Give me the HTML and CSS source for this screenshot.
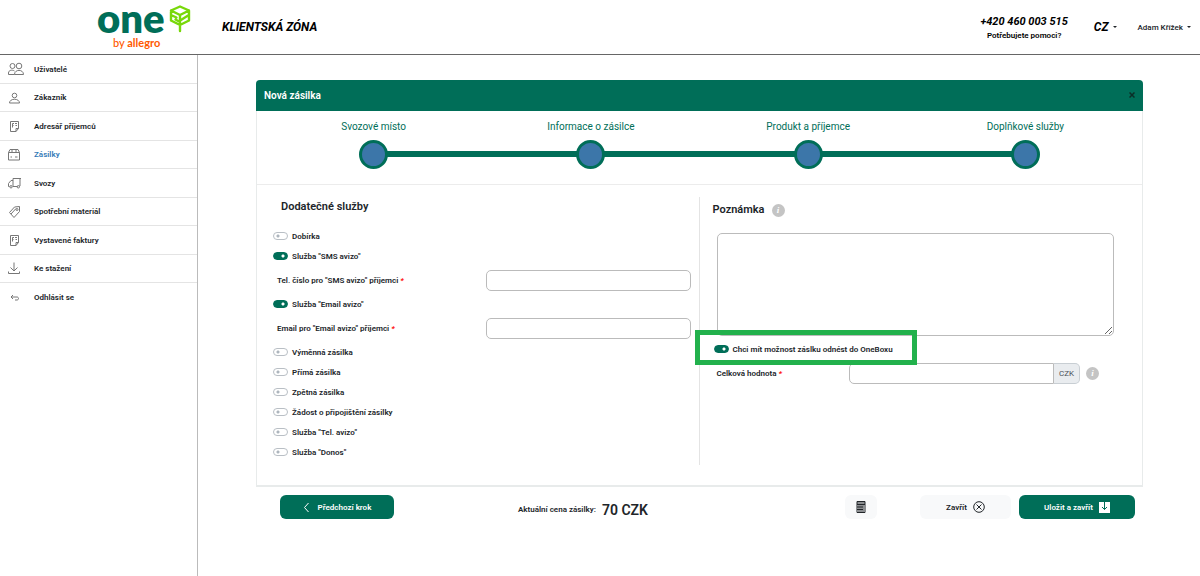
FILE: index.html
```
<!DOCTYPE html>
<html lang="cs">
<head>
  <meta charset="UTF-8">
  <meta name="viewport" content="width=device-width, initial-scale=1.0">
  <title>Klientská zóna - Nová zásilka</title>
  <link rel="stylesheet" href="styles.css">
</head>
<body>
  <header class="topbar">
    <a class="logo" href="#">
      <span class="logo-main">
        <span class="logo-name">one</span>
        <svg width="22" height="28" viewBox="0 0 22 28" fill="none" stroke="#78d80a" stroke-width="2.4" stroke-linejoin="round" stroke-linecap="round">
          <path d="M11 1.500 20 5.500V15.500L11 20 2 15.500V5.500ZM2 5.500 11 10 20 5.500M11 10V26M3 10.500 7.500 12.500M11 17 6.500 14.500M12 15 19 10.500"/>
        </svg>
      </span>
      <span class="logo-by">by <b>allegro</b></span>
    </a>
    <h1 class="zone">KLIENTSKÁ ZÓNA</h1>
    <div class="contact">
      <a class="phone" href="tel:+420460003515">+420 460 003 515</a>
      <span>Potřebujete pomoci?</span>
    </div>
    <button class="menu-button lang" type="button">CZ <i class="caret"></i></button>
    <button class="menu-button user" type="button">Adam Křížek <i class="caret"></i></button>
  </header>

  <div class="layout">
    <nav class="sidebar">
      <a href="#">
        <svg width="16" height="14" viewBox="0 0 16 14"><circle cx="4.500" cy="4" r="2.500"/><circle cx="11" cy="4" r="2.800"/><path d="M6.500 12.500H.5V11c0-3 4-3.500 6-2M6.500 12.500c0-5.500 9-5.500 9 0Z"/></svg>
        Uživatelé
      </a>
      <a href="#">
        <svg width="16" height="14" viewBox="0 0 16 14"><circle cx="6.500" cy="4.500" r="2.300"/><path d="M1.500 12c0-5 10-5 10 0Z"/></svg>
        Zákazník
      </a>
      <a href="#">
        <svg width="16" height="14" viewBox="0 0 16 14"><path d="M2.500 2.500h8v7l-2.500 3H2.500ZM8 12.500v-3h2.500M4.500 4.500h1.500M4.500 6.500h1M4.500 4.500v4M7 4.500h2M7.500 6.500H9"/></svg>
        Adresář příjemců
      </a>
      <a class="active" href="#">
        <svg width="16" height="14" viewBox="0 0 16 14"><path d="M.5 4.500 2 1.500h8l1.500 3v7.500H.5ZM.5 4.500h11M4 2v2M8 2v2M2.500 9h1.500M7 9h2.500"/></svg>
        Zásilky
      </a>
      <a href="#">
        <svg width="16" height="14" viewBox="0 0 16 14"><path d="M5 10.500V2.500h8M12 2.500v7.500h-.5M9.500 10.500H5M5 4.500H3L.5 7.500v3h1"/><circle cx="3" cy="10.800" r="1.200"/><circle cx="10.300" cy="10.800" r="1.200"/></svg>
        Svozy
      </a>
      <a href="#">
        <svg width="16" height="14" viewBox="0 0 16 14"><path d="M1.500 7.500 6.500 2 11.500 1.500v5L6 12.500ZM3 9 8 3.500"/><circle cx="9" cy="4.500" r="1"/></svg>
        Spotřební materiál
      </a>
      <a href="#">
        <svg width="16" height="14" viewBox="0 0 16 14"><path d="M2.500 2.500h8v7l-2.500 3H2.500ZM8 12.500v-3h2.500M4.500 4.500h1.500M4.500 6.500h1M4.500 4.500v4M7 4.500h2M7.500 6.500H9"/></svg>
        Vystavené faktury
      </a>
      <a href="#">
        <svg width="16" height="14" viewBox="0 0 16 14"><path d="M6 .5v8.500M2.500 5.500 6 9 9.500 5.500M.5 9.500v2h11v-2"/></svg>
        Ke stažení
      </a>
      <a href="#">
        <svg width="16" height="14" viewBox="0 0 16 14"><path d="M5 4 3 6l2 2M3 6h6c2 0 2 3 0 3H7"/></svg>
        Odhlásit se
      </a>
    </nav>

    <main class="content">
      <section class="panel">
        <div class="panel-head">
          <h2>Nová zásilka</h2>
          <button class="close" type="button" aria-label="Zavřít okno">
            <svg width="6" height="6" viewBox="0 0 6 6"><path d="M.5.5l5 5M5.500.5l-5 5"/></svg>
          </button>
        </div>

        <ol class="steps">
          <li>Svozové místo<span class="dot"></span></li>
          <li>Informace o zásilce<span class="dot"></span></li>
          <li>Produkt a příjemce<span class="dot"></span></li>
          <li>Doplňkové služby<span class="dot"></span></li>
        </ol>

        <form class="columns" id="shipment">
          <div class="services">
            <h3>Dodatečné služby</h3>
            <label class="toggle"><input type="checkbox">Dobírka</label>
            <label class="toggle"><input type="checkbox" checked>Služba "SMS avizo"</label>
            <div class="field">
              <label for="sms">Tel. číslo pro "SMS avizo" příjemci <em>*</em></label>
              <input type="tel" id="sms">
            </div>
            <label class="toggle"><input type="checkbox" checked>Služba "Email avizo"</label>
            <div class="field">
              <label for="email">Email pro "Email avizo" příjemci <em>*</em></label>
              <input type="email" id="email">
            </div>
            <label class="toggle"><input type="checkbox">Výměnná zásilka</label>
            <label class="toggle"><input type="checkbox">Přímá zásilka</label>
            <label class="toggle"><input type="checkbox">Zpětná zásilka</label>
            <label class="toggle"><input type="checkbox">Žádost o připojištění zásilky</label>
            <label class="toggle"><input type="checkbox">Služba "Tel. avizo"</label>
            <label class="toggle"><input type="checkbox">Služba "Donos"</label>
          </div>

          <div class="note">
            <h3><label for="note">Poznámka</label> <span class="info">i</span></h3>
            <textarea id="note"></textarea>
            <label class="toggle marked"><input type="checkbox" checked>Chci mít možnost záslku odnést do OneBoxu</label>
            <div class="value">
              <label for="value">Celková hodnota <em>*</em></label>
              <div class="input-group">
                <input type="text" id="value">
                <span>CZK</span>
              </div>
              <span class="info">i</span>
            </div>
          </div>
        </form>
      </section>

      <div class="actions">
        <button class="btn primary back" type="button">
          <svg width="7" height="11" viewBox="0 0 7 11"><path d="M5.500 1 1.500 5.500l4 4.500"/></svg>
          Předchozí krok
        </button>
        <p class="price">Aktuální cena zásilky: <strong>70 CZK</strong></p>
        <button class="btn calc" type="button" aria-label="Kalkulačka">
          <svg width="10" height="12" viewBox="0 0 10 12"><path d="M1 .5h8v11H1ZM1 2h8M1 3.500h8M3 4v7M5 4v7M7 4v7M1 6h6M1 8.500h6"/></svg>
        </button>
        <button class="btn cancel" type="button">
          Zavřít
          <svg width="12" height="12" viewBox="0 0 12 12"><circle cx="6" cy="6" r="5.300"/><path d="m3.500 3.500 5 5M8.500 3.500l-5 5"/></svg>
        </button>
        <button class="btn primary save" type="submit" form="shipment">
          Uložit a zavřít
          <svg width="11" height="11" viewBox="0 0 11 11"><path class="sheet" d="M0 0h11v11H0Z"/><path class="arrow" d="M5.500 0v7.500M3 5l2.500 2.500L8 5"/></svg>
        </button>
      </div>
    </main>
  </div>
</body>
</html>
```
FILE: styles.css
```
*, *::before, *::after {
  box-sizing: border-box;
  margin: 0;
  padding: 0;
}
body {
  display: flex;
  flex-direction: column;
  min-height: 100vh;
  font-family: Roboto, sans-serif;
  font-size: 8px;
  font-weight: 600;
  color: #212529;
  background: #fff;
}
button, input, textarea {
  font: inherit;
  color: inherit;
}
button {
  border: none;
  background: none;
  cursor: pointer;
}
a {
  color: inherit;
  text-decoration: none;
}
svg {
  flex: none;
  fill: none;
}
em {
  color: #f00;
}

/* top bar */
.topbar {
  display: flex;
  align-items: center;
  height: 55px;
  padding: 0 9px 0 97px;
  border-bottom: 1px solid #666;
}
.logo {
  width: 93px;
  font-family: Lato, sans-serif;
}
.logo-main {
  display: flex;
  align-items: flex-start;
  gap: 4px;
  height: 31px;
}
.logo-name {
  font-size: 40px;
  line-height: 26px;
  font-weight: 800;
  color: #006e58;
}
.logo-by {
  display: block;
  padding-left: 16px;
  font-size: 11px;
  line-height: 14px;
  font-weight: 500;
  color: #ff5a00;
}
.zone {
  margin: 0 auto 0 32px;
  font-size: 12px;
  font-style: italic;
  font-weight: 700;
  color: #000;
}
.contact {
  display: flex;
  flex-direction: column;
  align-items: center;
  gap: 3px;
  color: #000;
}
.phone {
  font-size: 11px;
  line-height: 13px;
  font-style: italic;
  font-weight: 700;
}
.menu-button {
  display: flex;
  align-items: center;
  gap: 4px;
}
.lang {
  margin-left: 26px;
  font-size: 12px;
  font-style: italic;
  font-weight: 700;
  color: #000;
}
.user {
  margin-left: 21px;
  font-weight: 500;
}
.caret {
  border: 2px solid transparent;
  border-top-color: #212529;
  border-bottom: 0;
}

.layout {
  display: flex;
  flex: 1;
}

/* left menu */
.sidebar {
  flex: 0 0 198px;
  border-right: 1px solid #bbb;
}
.sidebar a {
  display: flex;
  align-items: center;
  gap: 10px;
  height: 29px;
  padding-left: 8px;
  border-bottom: 1px solid #e4e4e4;
}
.sidebar a:nth-child(even) {
  height: 28px;
}
.sidebar a:last-child {
  border-bottom: none;
}
.sidebar svg {
  stroke: #777;
}
.sidebar .active {
  color: #337ab7;
}

/* shipment panel */
.content {
  flex: 1;
  padding: 25px 57px 0 58px;
}
.panel {
  border: 1px solid #e8ebeb;
  border-top: none;
  border-bottom-width: 2px;
  border-radius: 4px 4px 0 0;
}
.panel-head {
  display: flex;
  align-items: center;
  justify-content: space-between;
  height: 31px;
  margin: 0 -1px;
  padding: 0 8px;
  border-radius: 4px 4px 0 0;
  color: #fff;
  background: #006e58;
}
.panel-head h2 {
  font-size: 10px;
  font-weight: 600;
}
.close {
  display: flex;
  padding-bottom: 2px;
}
.close svg {
  stroke: #0b2e27;
  stroke-width: 1.5;
}
.steps {
  display: flex;
  height: 74px;
  padding: 10px 8px 0;
  list-style: none;
  border-bottom: 1px solid #ececec;
}
.steps li {
  display: flex;
  flex: 1;
  flex-direction: column;
  align-items: center;
  gap: 7px;
  position: relative;
  font-size: 10px;
  line-height: 12px;
  font-weight: 400;
  color: #006e58;
}
.steps li + li::before {
  content: "";
  position: absolute;
  top: 30px;
  right: 50%;
  width: 100%;
  height: 6px;
  background: #006e58;
}
.dot {
  position: relative;
  z-index: 1;
  width: 29px;
  height: 29px;
  border: 3px solid #006e58;
  border-radius: 50%;
  background: #3c76a9;
}
.columns {
  display: grid;
  grid-template-columns: 1fr 1fr;
  padding: 12px 0 20px;
}
h3 {
  display: flex;
  align-items: center;
  gap: 7px;
  font-size: 11px;
  line-height: 20px;
  font-weight: 600;
}
.services {
  min-height: 268px;
  padding: 0 8px 0 16px;
  border-right: 1px solid #e4e4e4;
}
.services h3 {
  padding-left: 8px;
  margin-bottom: 9px;
}
.toggle {
  display: flex;
  align-items: center;
  gap: 4px;
  height: 20px;
}
.toggle input {
  appearance: none;
  width: 15px;
  height: 8px;
  border: 1px solid #b9bfc5;
  border-radius: 4px;
  background: radial-gradient(circle at 4px 3px, #adb5bd 1px, #fff 2px);
}
.toggle input:checked {
  border-color: #006e58;
  background: radial-gradient(circle at 9px 3px, #fff 1px, #006e58 2px);
}
.field {
  display: flex;
  align-items: center;
  justify-content: space-between;
  height: 28px;
  padding-left: 4px;
}
.field input {
  width: 205px;
  height: 21px;
  padding: 0 6px;
  border: 1px solid #bbb;
  border-radius: 5px;
}
.note {
  padding: 3px 28px 0 13px;
}
.note h3 {
  margin-bottom: 13px;
}
.note textarea {
  display: block;
  width: calc(100% - 4px);
  height: 103px;
  margin: 0 0 3px 4px;
  padding: 6px;
  border: 1px solid #bbb;
  border-radius: 5px;
}
.info {
  flex: none;
  width: 13px;
  height: 13px;
  border-radius: 50%;
  font-family: "Liberation Serif", serif;
  font-size: 9px;
  line-height: 13px;
  font-style: italic;
  font-weight: 700;
  text-align: center;
  color: #fff;
  background: #c4c4c4;
}

/* green frame around the OneBox option */
.marked {
  position: relative;
  padding-left: 1px;
}
.marked::after {
  content: "";
  position: absolute;
  z-index: 1;
  top: -9px;
  left: -18px;
  width: 222px;
  height: 35px;
  border: 5px solid #22b14c;
  pointer-events: none;
}
.value {
  display: flex;
  align-items: center;
  margin-top: 4px;
  padding-left: 4px;
}
.value label {
  flex: 1;
}
.input-group {
  display: flex;
  width: 58%;
  height: 21px;
  margin-right: 6px;
}
.input-group input {
  flex: 1;
  min-width: 0;
  padding: 0 6px;
  border: 1px solid #bbb;
  border-radius: 5px 0 0 5px;
}
.input-group span {
  padding: 0 5px;
  border: 1px solid #c8ced3;
  border-left: none;
  border-radius: 0 5px 5px 0;
  line-height: 19px;
  font-weight: 400;
  color: #495057;
  background: #e9ecef;
}
.value .info {
  margin-right: 15px;
}

/* buttons under the panel */
.actions {
  display: flex;
  align-items: center;
  padding: 8px 8px 0 24px;
}
.btn {
  display: flex;
  align-items: center;
  justify-content: center;
  gap: 6px;
  height: 24px;
  border-radius: 6px;
  background: #f8f9fa;
}
.btn svg {
  stroke: #212529;
}
.primary {
  color: #fff;
  background: #006e58;
}
.primary svg {
  stroke: #fff;
}
.back {
  width: 114px;
  gap: 8px;
}
.price {
  display: flex;
  align-items: center;
  gap: 6px;
  margin: 5px auto 0 124px;
}
.price strong {
  font-size: 14px;
  font-weight: 600;
}
.calc {
  width: 32px;
}
.cancel {
  width: 91px;
  margin: 0 8px 0 43px;
}
.save {
  width: 116px;
}
.save .sheet {
  fill: #fff;
  stroke: none;
}
.save .arrow {
  stroke: #006e58;
}
```
